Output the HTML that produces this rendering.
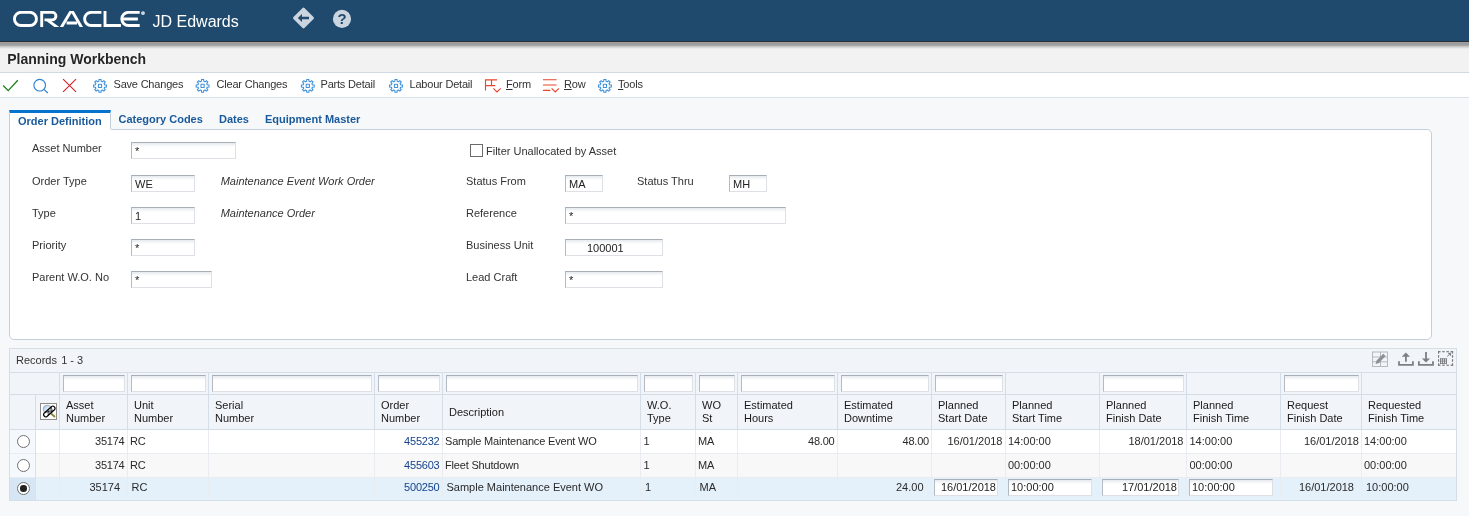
<!DOCTYPE html>
<html>
<head>
<meta charset="utf-8">
<title>Planning Workbench</title>
<style>
*{box-sizing:border-box;margin:0;padding:0}
html,body{width:1469px;height:516px;overflow:hidden;background:#f6f8fa;font-family:"Liberation Sans",sans-serif;font-size:12px;color:#333}
.abs{position:absolute}
#wrap{position:absolute;left:0;top:0;width:1469px;height:516px;will-change:transform;overflow:hidden}
#hdr{position:absolute;left:0;top:0;width:1469px;height:42px;background:#1f4a6d;border-bottom:1px solid #2a2f36;z-index:5}
#shd{position:absolute;left:0;top:42px;width:1469px;height:7px;background:linear-gradient(#a2a2a2 0,#999 28%,#a8a8a8 48%,#d2d2d2 72%,#f2f2f2 100%);z-index:4}
#jde{position:absolute;left:152.5px;top:12px;font-size:16px;color:#fff;letter-spacing:0;line-height:20px}
#titlebar{position:absolute;left:0;top:42px;width:1469px;height:31px;background:#f2f2f2;border-bottom:1px solid #cfd9e2}
#title{position:absolute;left:7.2px;top:51px;letter-spacing:0;font-size:14px;font-weight:bold;color:#252525;line-height:16px;z-index:6;text-shadow:0 0 2px #fff}
#tb{position:absolute;left:0;top:73px;width:1469px;height:25px;background:#fff;border-bottom:1px solid #d9e1e8}
.tbt{position:absolute;top:77px;font-size:11px;color:#333;line-height:14px;white-space:nowrap;letter-spacing:-0.2px}
.tbt u{text-decoration:underline}
/* tabs */
#panel{position:absolute;left:9px;top:129px;width:1423px;height:211px;background:#fff;border:1px solid #c3cfda;border-radius:0 5px 5px 5px}
#tabact{position:absolute;left:9px;top:110px;width:102px;height:20px;background:#fff;border-left:1px solid #c3cfda;border-right:1px solid #c3cfda;border-top:3px solid #0572ce}
#tabcov{position:absolute;left:10px;top:129px;width:101px;height:1px;background:#fff}
.tab{position:absolute;top:112px;font-size:11px;font-weight:bold;color:#1a5a9a;line-height:14px;white-space:nowrap}
.lbl{position:absolute;font-size:11px;color:#333;line-height:14px;white-space:nowrap}
.it{font-style:italic}
.inp{position:absolute;height:17px;background:linear-gradient(#e6eaee,#fff 4px);border:1px solid #dde1e6;border-top-color:#a7aeb8;border-left-color:#b4bac3;font-size:11px;line-height:16px;padding-left:3px;color:#222;white-space:nowrap}
/* grid */
#grid{position:absolute;left:9px;top:348px;width:1448px;height:153px;background:#f1f4f8;border:1px solid #d5dee6}
.hl{position:absolute;left:10px;width:1446px;height:1px;background:#d5dee6}
.vl{position:absolute;width:1px;background:#dbe3ea}
.row{position:absolute;left:10px;width:1446px}
.gh{position:absolute;font-size:11px;line-height:13px;color:#1a1a1a;white-space:nowrap;letter-spacing:0}
.gc{position:absolute;font-size:11px;line-height:14px;color:#2a2a2a;white-space:nowrap}
.gr{text-align:right}
.lnk{color:#14438c}
.t1{letter-spacing:-0.22px}
.t2{letter-spacing:-0.18px}
.qbe{position:absolute;top:375px;height:17px;background:linear-gradient(#e6eaee,#fff 4px);border:1px solid #dde1e6;border-top-color:#a7aeb8;border-left-color:#b4bac3}
.radio{position:absolute;left:17px;width:13px;height:13px;border:1px solid #6f6f6f;border-radius:50%;background:#fff}
.radio.on:after{content:"";position:absolute;left:2.2px;top:2.2px;width:6.6px;height:6.6px;border-radius:50%;background:#222}
</style>
</head>
<body>
<div id="wrap">
<!-- HEADER -->
<div id="hdr">
  <svg class="abs" style="left:0;top:0" width="160" height="42" viewBox="0 0 160 42">
    <defs><clipPath id="lc"><rect x="10" y="10.9" width="135" height="16.1"/></clipPath></defs>
    <g fill="none" stroke="#fff" stroke-width="2.9" stroke-linejoin="miter" clip-path="url(#lc)">
      <rect x="14.45" y="12.35" width="22" height="13.2" rx="6.6"/>
      <path d="M41.7,28 V12.35 H52.2 a3.75,3.75 0 0 1 0,7.5 H44.5 M47.2,19.9 L58.5,28.2"/>
      <path d="M60.6,28.5 L71.6,10.2 L82.2,28.5 M66.6,23 H77"/>
      <path d="M101.4,12.35 H91.2 a6.6,6.6 0 0 0 0,13.2 H101.4"/>
      <path d="M105,10 V25.55 H120.9"/>
      <path d="M139.7,12.35 H128.4 a6.6,6.6 0 0 0 0,13.2 H139.7 M123.4,18.95 H137.9"/>
    </g>
    <circle cx="143" cy="13.1" r="1.9" fill="#dfe6ec"/><circle cx="143" cy="13.1" r=".6" fill="#8fa4b6"/>
  </svg>
  <div id="jde">JD Edwards</div>
  <svg class="abs" style="left:290px;top:5px" width="70" height="28" viewBox="290 5 70 28">
    <rect x="295.75" y="10.25" width="15.5" height="15.5" rx="1.3" transform="rotate(45 303.5 18)" fill="#cbd5df"/>
    <path d="M297.8,18 L302,14 V16.7 H309 V19.3 H302 V22 Z" fill="#1f4a6d"/>
    <circle cx="342" cy="18.9" r="9.1" fill="#cbd5df"/>
  </svg>
  <div class="abs" style="left:333px;top:10px;width:18px;text-align:center;font-size:15px;font-weight:bold;color:#1f4a6d;line-height:18px">?</div>
</div>
<div id="titlebar"></div><div id="shd"></div>
<div id="title">Planning Workbench</div>
<div id="tb"></div>
<svg class="abs" style="left:0;top:73px" width="700" height="24" viewBox="0 73 700 24">
  <path d="M3.2,85.5 L8.2,90.6 L17.8,80.3" fill="none" stroke="#1b7f1b" stroke-width="1.3"/>
  <circle cx="39.7" cy="85.2" r="5.8" fill="none" stroke="#2a7fd4" stroke-width="1.1"/>
  <path d="M43.9,89.3 L47.8,93" stroke="#2a7fd4" stroke-width="1.1"/>
  <path d="M63.1,79.2 L76,91.9 M76,79.2 L63.1,91.9" stroke="#d4222a" stroke-width="1.1" fill="none"/>
  <g transform="translate(100,85.9)"><g fill="none" stroke="#3b8fd9" stroke-width="1.05" stroke-linejoin="miter"><path d="M-1.22,-4.54 L-1.02,-6.42 L1.02,-6.42 L1.22,-4.54 A4.70,4.70 0 0 1 2.35,-4.07 L3.82,-5.26 L5.26,-3.82 L4.07,-2.35 A4.70,4.70 0 0 1 4.54,-1.22 L6.42,-1.02 L6.42,1.02 L4.54,1.22 A4.70,4.70 0 0 1 4.07,2.35 L5.26,3.82 L3.82,5.26 L2.35,4.07 A4.70,4.70 0 0 1 1.22,4.54 L1.02,6.42 L-1.02,6.42 L-1.22,4.54 A4.70,4.70 0 0 1 -2.35,4.07 L-3.82,5.26 L-5.26,3.82 L-4.07,2.35 A4.70,4.70 0 0 1 -4.54,1.22 L-6.42,1.02 L-6.42,-1.02 L-4.54,-1.22 A4.70,4.70 0 0 1 -4.07,-2.35 L-5.26,-3.82 L-3.82,-5.26 L-2.35,-4.07 A4.70,4.70 0 0 1 -1.22,-4.54 Z"/><rect x="-1.6" y="-1.6" width="3.2" height="3.2" rx=".3"/></g></g> <g transform="translate(202.6,85.9)"><g fill="none" stroke="#3b8fd9" stroke-width="1.05" stroke-linejoin="miter"><path d="M-1.22,-4.54 L-1.02,-6.42 L1.02,-6.42 L1.22,-4.54 A4.70,4.70 0 0 1 2.35,-4.07 L3.82,-5.26 L5.26,-3.82 L4.07,-2.35 A4.70,4.70 0 0 1 4.54,-1.22 L6.42,-1.02 L6.42,1.02 L4.54,1.22 A4.70,4.70 0 0 1 4.07,2.35 L5.26,3.82 L3.82,5.26 L2.35,4.07 A4.70,4.70 0 0 1 1.22,4.54 L1.02,6.42 L-1.02,6.42 L-1.22,4.54 A4.70,4.70 0 0 1 -2.35,4.07 L-3.82,5.26 L-5.26,3.82 L-4.07,2.35 A4.70,4.70 0 0 1 -4.54,1.22 L-6.42,1.02 L-6.42,-1.02 L-4.54,-1.22 A4.70,4.70 0 0 1 -4.07,-2.35 L-5.26,-3.82 L-3.82,-5.26 L-2.35,-4.07 A4.70,4.70 0 0 1 -1.22,-4.54 Z"/><rect x="-1.6" y="-1.6" width="3.2" height="3.2" rx=".3"/></g></g> <g transform="translate(307.8,85.9)"><g fill="none" stroke="#3b8fd9" stroke-width="1.05" stroke-linejoin="miter"><path d="M-1.22,-4.54 L-1.02,-6.42 L1.02,-6.42 L1.22,-4.54 A4.70,4.70 0 0 1 2.35,-4.07 L3.82,-5.26 L5.26,-3.82 L4.07,-2.35 A4.70,4.70 0 0 1 4.54,-1.22 L6.42,-1.02 L6.42,1.02 L4.54,1.22 A4.70,4.70 0 0 1 4.07,2.35 L5.26,3.82 L3.82,5.26 L2.35,4.07 A4.70,4.70 0 0 1 1.22,4.54 L1.02,6.42 L-1.02,6.42 L-1.22,4.54 A4.70,4.70 0 0 1 -2.35,4.07 L-3.82,5.26 L-5.26,3.82 L-4.07,2.35 A4.70,4.70 0 0 1 -4.54,1.22 L-6.42,1.02 L-6.42,-1.02 L-4.54,-1.22 A4.70,4.70 0 0 1 -4.07,-2.35 L-5.26,-3.82 L-3.82,-5.26 L-2.35,-4.07 A4.70,4.70 0 0 1 -1.22,-4.54 Z"/><rect x="-1.6" y="-1.6" width="3.2" height="3.2" rx=".3"/></g></g> <g transform="translate(396,85.9)"><g fill="none" stroke="#3b8fd9" stroke-width="1.05" stroke-linejoin="miter"><path d="M-1.22,-4.54 L-1.02,-6.42 L1.02,-6.42 L1.22,-4.54 A4.70,4.70 0 0 1 2.35,-4.07 L3.82,-5.26 L5.26,-3.82 L4.07,-2.35 A4.70,4.70 0 0 1 4.54,-1.22 L6.42,-1.02 L6.42,1.02 L4.54,1.22 A4.70,4.70 0 0 1 4.07,2.35 L5.26,3.82 L3.82,5.26 L2.35,4.07 A4.70,4.70 0 0 1 1.22,4.54 L1.02,6.42 L-1.02,6.42 L-1.22,4.54 A4.70,4.70 0 0 1 -2.35,4.07 L-3.82,5.26 L-5.26,3.82 L-4.07,2.35 A4.70,4.70 0 0 1 -4.54,1.22 L-6.42,1.02 L-6.42,-1.02 L-4.54,-1.22 A4.70,4.70 0 0 1 -4.07,-2.35 L-5.26,-3.82 L-3.82,-5.26 L-2.35,-4.07 A4.70,4.70 0 0 1 -1.22,-4.54 Z"/><rect x="-1.6" y="-1.6" width="3.2" height="3.2" rx=".3"/></g></g> <g transform="translate(604.9,85.9)"><g fill="none" stroke="#3b8fd9" stroke-width="1.05" stroke-linejoin="miter"><path d="M-1.22,-4.54 L-1.02,-6.42 L1.02,-6.42 L1.22,-4.54 A4.70,4.70 0 0 1 2.35,-4.07 L3.82,-5.26 L5.26,-3.82 L4.07,-2.35 A4.70,4.70 0 0 1 4.54,-1.22 L6.42,-1.02 L6.42,1.02 L4.54,1.22 A4.70,4.70 0 0 1 4.07,2.35 L5.26,3.82 L3.82,5.26 L2.35,4.07 A4.70,4.70 0 0 1 1.22,4.54 L1.02,6.42 L-1.02,6.42 L-1.22,4.54 A4.70,4.70 0 0 1 -2.35,4.07 L-3.82,5.26 L-5.26,3.82 L-4.07,2.35 A4.70,4.70 0 0 1 -4.54,1.22 L-6.42,1.02 L-6.42,-1.02 L-4.54,-1.22 A4.70,4.70 0 0 1 -4.07,-2.35 L-5.26,-3.82 L-3.82,-5.26 L-2.35,-4.07 A4.70,4.70 0 0 1 -1.22,-4.54 Z"/><rect x="-1.6" y="-1.6" width="3.2" height="3.2" rx=".3"/></g></g>
  <g fill="none" stroke="#e8432e" stroke-width="1.1">
    <path d="M485.5,79.4 V90.6 M485,79.9 H497 M485,85.6 H495.3 M491.5,79.9 V85.6 M493.4,88.4 L497,92 L500.7,88.4"/>
    <path d="M543,79.7 H556.6 M543,85 H556.6 M543,90.4 H550.4 M551.6,88.4 L555.3,92 L558.9,88.4"/>
  </g>
</svg>
<div class="tbt" style="left:113.5px">Save Changes</div>
<div class="tbt" style="left:216.5px">Clear Changes</div>
<div class="tbt" style="left:320.5px">Parts Detail</div>
<div class="tbt" style="left:409.5px">Labour Detail</div>
<div class="tbt" style="left:506px"><u>F</u>orm</div>
<div class="tbt" style="left:564px"><u>R</u>ow</div>
<div class="tbt" style="left:618px"><u>T</u>ools</div>

<!-- PANEL -->
<div id="panel"></div>
<div id="tabact"></div><div id="tabcov"></div>
<div class="tab" style="left:18px;top:114px">Order Definition</div>
<div class="tab" style="left:118.5px">Category Codes</div>
<div class="tab" style="left:219px">Dates</div>
<div class="tab" style="left:265px">Equipment Master</div>

<div class="lbl" style="left:32px;top:141px">Asset Number</div>
<div class="lbl" style="left:32px;top:174px">Order Type</div>
<div class="lbl" style="left:32px;top:206px">Type</div>
<div class="lbl" style="left:32px;top:238px">Priority</div>
<div class="lbl" style="left:32px;top:270px">Parent W.O. No</div>
<div class="inp" style="left:131px;top:142px;width:105px">*</div>
<div class="inp" style="left:131px;top:175px;width:64px">WE</div>
<div class="inp" style="left:131px;top:207px;width:64px">1</div>
<div class="inp" style="left:131px;top:239px;width:64px">*</div>
<div class="inp" style="left:131px;top:271px;width:81px">*</div>
<div class="lbl it" style="left:220.7px;top:174px">Maintenance Event Work Order</div>
<div class="lbl it" style="left:220.7px;top:206px">Maintenance Order</div>

<div class="abs" style="left:470px;top:144px;width:13px;height:13px;border:1px solid #6a6a6a;background:#fff"></div>
<div class="lbl" style="left:486px;top:144px">Filter Unallocated by Asset</div>
<div class="lbl" style="left:466px;top:174px">Status From</div>
<div class="lbl" style="left:637px;top:174px">Status Thru</div>
<div class="lbl" style="left:466px;top:206px">Reference</div>
<div class="lbl" style="left:466px;top:238px">Business Unit</div>
<div class="lbl" style="left:466px;top:270px">Lead Craft</div>
<div class="inp" style="left:565px;top:175px;width:38px">MA</div>
<div class="inp" style="left:729px;top:175px;width:38px">MH</div>
<div class="inp" style="left:565px;top:207px;width:221px">*</div>
<div class="inp" style="left:565px;top:239px;width:98px;padding-left:21px">100001</div>
<div class="inp" style="left:565px;top:271px;width:98px">*</div>

<!-- GRID -->
<div id="grid"></div>
<div class="row" style="top:430px;height:23px;background:#fff"></div>
<div class="row" style="top:454px;height:23px;background:#f8f8f8"></div>
<div class="row" style="top:478px;height:22px;background:#e4f0fa"></div>
<div class="abs" style="left:10px;top:430px;width:25px;height:47px;background:#f5f8fc"></div>
<div class="abs" style="left:10px;top:478px;width:25px;height:22px;background:#d6e6f4"></div>
<div class="hl" style="top:372px;background:#d5dee6"></div>
<div class="hl" style="top:394px;background:#d5dee6"></div>
<div class="hl" style="top:429px;background:#d5dee6"></div>
<div class="hl" style="top:453px;background:#e9edf1"></div>
<div class="hl" style="top:477px;background:#e9edf1"></div>
<div class="vl" style="left:35px;top:395px;height:34px;background:#d5dee6"></div>
<div class="vl" style="left:35px;top:430px;height:70px;background:#d8e1ea"></div>
<div class="vl" style="left:59px;top:373px;height:56px;background:#d5dee6"></div>
<div class="vl" style="left:59px;top:430px;height:70px;background:#e9edf1"></div>
<div class="vl" style="left:127px;top:373px;height:56px;background:#d5dee6"></div>
<div class="vl" style="left:127px;top:430px;height:70px;background:#e9edf1"></div>
<div class="vl" style="left:208px;top:373px;height:56px;background:#d5dee6"></div>
<div class="vl" style="left:208px;top:430px;height:70px;background:#e9edf1"></div>
<div class="vl" style="left:374px;top:373px;height:56px;background:#d5dee6"></div>
<div class="vl" style="left:374px;top:430px;height:70px;background:#e9edf1"></div>
<div class="vl" style="left:442px;top:373px;height:56px;background:#d5dee6"></div>
<div class="vl" style="left:442px;top:430px;height:70px;background:#e9edf1"></div>
<div class="vl" style="left:640px;top:373px;height:56px;background:#d5dee6"></div>
<div class="vl" style="left:640px;top:430px;height:70px;background:#e9edf1"></div>
<div class="vl" style="left:695px;top:373px;height:56px;background:#d5dee6"></div>
<div class="vl" style="left:695px;top:430px;height:70px;background:#e9edf1"></div>
<div class="vl" style="left:737px;top:373px;height:56px;background:#d5dee6"></div>
<div class="vl" style="left:737px;top:430px;height:70px;background:#e9edf1"></div>
<div class="vl" style="left:837px;top:373px;height:56px;background:#d5dee6"></div>
<div class="vl" style="left:837px;top:430px;height:70px;background:#e9edf1"></div>
<div class="vl" style="left:931px;top:373px;height:56px;background:#d5dee6"></div>
<div class="vl" style="left:931px;top:430px;height:70px;background:#e9edf1"></div>
<div class="vl" style="left:1005px;top:373px;height:56px;background:#d5dee6"></div>
<div class="vl" style="left:1005px;top:430px;height:70px;background:#e9edf1"></div>
<div class="vl" style="left:1099px;top:373px;height:56px;background:#d5dee6"></div>
<div class="vl" style="left:1099px;top:430px;height:70px;background:#e9edf1"></div>
<div class="vl" style="left:1186px;top:373px;height:56px;background:#d5dee6"></div>
<div class="vl" style="left:1186px;top:430px;height:70px;background:#e9edf1"></div>
<div class="vl" style="left:1280px;top:373px;height:56px;background:#d5dee6"></div>
<div class="vl" style="left:1280px;top:430px;height:70px;background:#e9edf1"></div>
<div class="vl" style="left:1361px;top:373px;height:56px;background:#d5dee6"></div>
<div class="vl" style="left:1361px;top:430px;height:70px;background:#e9edf1"></div>
<div class="lbl" style="left:16px;top:353px">Records<span style="margin-left:1.1px"> </span>1 - 3</div>
<div class="qbe" style="left:63px;width:62px"></div>
<div class="qbe" style="left:131px;width:75px"></div>
<div class="qbe" style="left:212px;width:160px"></div>
<div class="qbe" style="left:378px;width:62px"></div>
<div class="qbe" style="left:446px;width:192px"></div>
<div class="qbe" style="left:644px;width:49px"></div>
<div class="qbe" style="left:699px;width:36px"></div>
<div class="qbe" style="left:741px;width:94px"></div>
<div class="qbe" style="left:841px;width:88px"></div>
<div class="qbe" style="left:935px;width:68px"></div>
<div class="qbe" style="left:1103px;width:81px"></div>
<div class="qbe" style="left:1284px;width:75px"></div>
<div class="gh" style="left:66px;top:399px">Asset<br>Number</div>
<div class="gh" style="left:134px;top:399px">Unit<br>Number</div>
<div class="gh" style="left:215px;top:399px">Serial<br>Number</div>
<div class="gh" style="left:381px;top:399px">Order<br>Number</div>
<div class="gh" style="left:647px;top:399px">W.O.<br>Type</div>
<div class="gh" style="left:702px;top:399px">WO<br>St</div>
<div class="gh" style="left:744px;top:399px">Estimated<br>Hours</div>
<div class="gh" style="left:844px;top:399px">Estimated<br>Downtime</div>
<div class="gh" style="left:938px;top:399px">Planned<br>Start Date</div>
<div class="gh" style="left:1012px;top:399px">Planned<br>Start Time</div>
<div class="gh" style="left:1106px;top:399px">Planned<br>Finish Date</div>
<div class="gh" style="left:1193px;top:399px">Planned<br>Finish Time</div>
<div class="gh" style="left:1287px;top:399px">Request<br>Finish Date</div>
<div class="gh" style="left:1368px;top:399px">Requested<br>Finish Time</div>
<div class="gh" style="left:449px;top:406px">Description</div>
<div class="radio" style="top:435px"></div>
<div class="radio" style="top:459px"></div>
<div class="radio on" style="top:482px"></div>
<div class="gc t1 gr " style="right:1344.5px;top:434px">35174</div>
<div class="gc t2 " style="left:130px;top:434px">RC</div>
<div class="gc t1 gr lnk" style="right:1029.5px;top:434px">455232</div>
<div class="gc t2 " style="left:445px;top:434px">Sample Maintenance Event WO</div>
<div class="gc t1 " style="left:643.5px;top:434px">1</div>
<div class="gc t2 " style="left:698px;top:434px">MA</div>
<div class="gc t1 gr " style="right:634.5px;top:434px">48.00</div>
<div class="gc t1 gr " style="right:540px;top:434px">48.00</div>
<div class="gc gr " style="right:466.5px;top:434px">16/01/2018</div>
<div class="gc " style="left:1008px;top:434px">14:00:00</div>
<div class="gc gr " style="right:285.5px;top:434px">18/01/2018</div>
<div class="gc " style="left:1189.5px;top:434px">14:00:00</div>
<div class="gc gr " style="right:110px;top:434px">16/01/2018</div>
<div class="gc " style="left:1364px;top:434px">14:00:00</div>
<div class="gc t1 gr " style="right:1344.5px;top:458px">35174</div>
<div class="gc t2 " style="left:130px;top:458px">RC</div>
<div class="gc t1 gr lnk" style="right:1029.5px;top:458px">455603</div>
<div class="gc t2 " style="left:445px;top:458px">Fleet Shutdown</div>
<div class="gc t1 " style="left:643.5px;top:458px">1</div>
<div class="gc t2 " style="left:698px;top:458px">MA</div>
<div class="gc " style="left:1008px;top:458px">00:00:00</div>
<div class="gc " style="left:1189.5px;top:458px">00:00:00</div>
<div class="gc " style="left:1364px;top:458px">00:00:00</div>
<div class="gc gr " style="right:1349px;top:480px">35174</div>
<div class="gc " style="left:131.5px;top:480px">RC</div>
<div class="gc gr lnk t1" style="right:1029.5px;top:480px">500250</div>
<div class="gc " style="left:446.5px;top:480px">Sample Maintenance Event WO</div>
<div class="gc " style="left:645px;top:480px">1</div>
<div class="gc " style="left:699.5px;top:480px">MA</div>
<div class="gc gr " style="right:545.5px;top:480px">24.00</div>
<div class="inp" style="left:934px;top:479px;width:64px;text-align:right;padding:0 1px 0 0;line-height:15px">16/01/2018</div>
<div class="inp" style="left:1008px;top:479px;width:84px;padding-left:2px;line-height:15px">10:00:00</div>
<div class="inp" style="left:1102px;top:479px;width:77px;text-align:right;padding:0 1px 0 0;line-height:15px">17/01/2018</div>
<div class="inp" style="left:1189px;top:479px;width:84px;padding-left:2px;line-height:15px">10:00:00</div>
<div class="gc gr " style="right:115px;top:480px">16/01/2018</div>
<div class="gc " style="left:1366px;top:480px">10:00:00</div>
<svg class="abs" style="left:1368px;top:349px" width="88" height="22" viewBox="1368 349 88 22">
 <g fill="none" stroke="#b6b9be" stroke-width="1"><rect x="1372.5" y="352" width="15" height="14.5"/><path d="M1372.5,357 H1387.5 M1372.5,361.8 H1387.5 M1380.5,352 V366.5"/></g>
 <path d="M1375.6,364 L1376.6,360.6 L1383.2,353.8 L1385.6,356.1 L1379,362.9 Z" fill="#8d9096"/>
 <g fill="none" stroke="#7c7f85" stroke-width="1.8"><path d="M1399,361.2 V364.8 H1412.9 V361.2"/><path d="M1405.9,361.8 V356"/><path d="M1418.9,361.2 V364.8 H1433 V361.2"/><path d="M1426,352.1 V359"/></g>
 <path d="M1405.9,352.4 L1401.8,356.8 H1410 Z" fill="#7c7f85"/>
 <path d="M1426,362.4 L1421.9,358.4 H1430.1 Z" fill="#7c7f85"/>
 <g fill="#75787d"><rect x="1438.00" y="351.10" width="2.50" height="1.15"/><rect x="1438.00" y="364.65" width="2.50" height="1.15"/><rect x="1438.00" y="351.10" width="1.15" height="2.50"/><rect x="1451.95" y="351.10" width="1.15" height="2.50"/><rect x="1442.20" y="351.10" width="2.50" height="1.15"/><rect x="1442.20" y="364.65" width="2.50" height="1.15"/><rect x="1438.00" y="355.17" width="1.15" height="2.50"/><rect x="1451.95" y="355.17" width="1.15" height="2.50"/><rect x="1446.40" y="351.10" width="2.50" height="1.15"/><rect x="1446.40" y="364.65" width="2.50" height="1.15"/><rect x="1438.00" y="359.23" width="1.15" height="2.50"/><rect x="1451.95" y="359.23" width="1.15" height="2.50"/><rect x="1450.60" y="351.10" width="2.50" height="1.15"/><rect x="1450.60" y="364.65" width="2.50" height="1.15"/><rect x="1438.00" y="363.30" width="1.15" height="2.50"/><rect x="1451.95" y="363.30" width="1.15" height="2.50"/><rect x="1440" y="358.4" width="0.9" height="5.4"/><rect x="1442" y="358.4" width="0.9" height="5.4"/><rect x="1444" y="358.4" width="0.9" height="5.4"/><rect x="1446" y="358.4" width="0.9" height="5.4"/><rect x="1440" y="358.4" width="6.9" height="0.9"/><rect x="1440" y="360.65" width="6.9" height="0.9"/><rect x="1440" y="362.9" width="6.9" height="0.9"/></g>
 <g fill="none" stroke="#75787d" stroke-width="1"><path d="M1447.3,356.3 L1450.6,353.2 M1448.1,353.3 H1450.6 V355.8"/></g>
</svg>
<svg class="abs" style="left:40px;top:403px" width="17" height="17" viewBox="0 0 17 17">
 <defs><pattern id="chk" width="2" height="2" patternUnits="userSpaceOnUse"><rect width="2" height="2" fill="#e8f0fb"/><rect width="1" height="1" fill="#111"/><rect x="1" y="1" width="1" height="1" fill="#111"/></pattern>
 <linearGradient id="mg" x1="0" y1="0" x2="1" y2="1"><stop offset="0" stop-color="#8fc0f5"/><stop offset=".55" stop-color="#e6f0fb"/><stop offset="1" stop-color="#fff"/></linearGradient></defs>
 <rect x=".5" y=".5" width="16" height="16" fill="#fff" stroke="#8c8c8c"/>
 <circle cx="7.2" cy="6.2" r="4" fill="url(#mg)" stroke="#a5a5a5" stroke-width=".9"/>
 <path d="M11.6,11 L14.5,13.6" stroke="#8a8426" stroke-width="1.8" stroke-linecap="round"/>
 <rect x="-6.9" y="-2.2" width="13.8" height="4.4" rx="2.2" transform="translate(9.3,8.5) rotate(-42)" fill="url(#chk)" stroke="#000" stroke-width="1.1"/>
 <rect x="-6.1" y="-1.4" width="3.4" height="2.8" rx="1.4" transform="translate(9.3,8.5) rotate(-42)" fill="#fff"/>
 <rect x="4.0" y="-1.4" width="2.1" height="2.8" rx="1.2" transform="translate(9.3,8.5) rotate(-42)" fill="#fff"/>
</svg>
</div>
</body>
</html>
